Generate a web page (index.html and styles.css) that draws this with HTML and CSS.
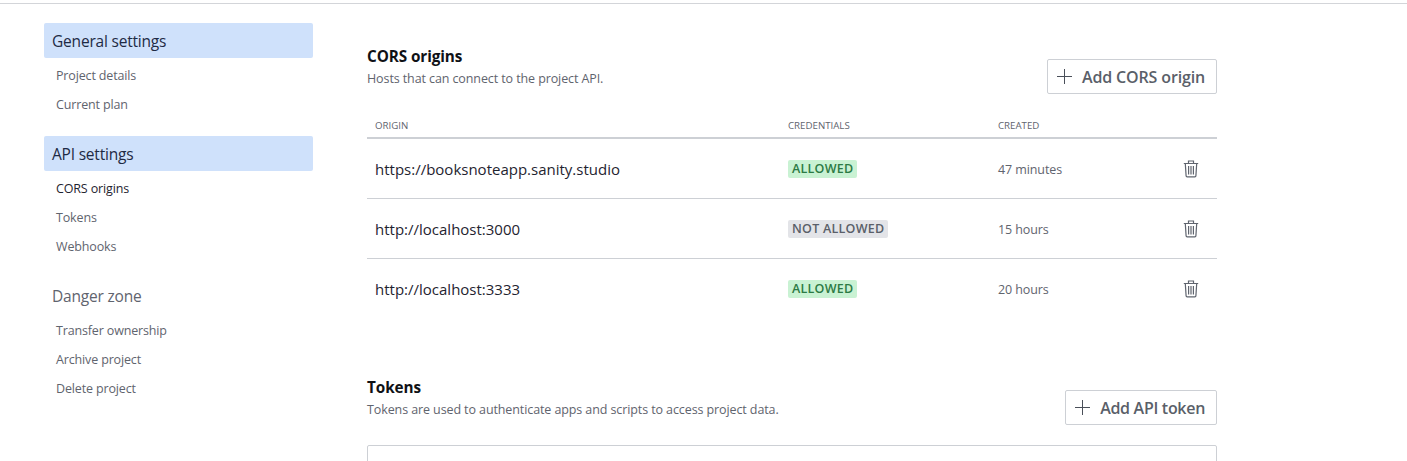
FILE: index.html
```html
<!DOCTYPE html>
<html lang="en">
<head>
<meta charset="utf-8">
<title>Project settings</title>
<link rel="stylesheet" href="styles.css">
</head>
<body>
<svg class="defs" width="0" height="0" aria-hidden="true">
  <symbol id="trash" viewBox="0 0 16 18">
    <path d="M.8 3.500h14.400M5.500 3.500V1h5v2.500M2.300 3.500l.8 12.400a1 1 0 0 0 1 .9h7.800a1 1 0 0 0 1-.9l.8-12.400M5.600 6v8.500M8 6v8.500M10.400 6v8.500" fill="none" stroke="currentColor" stroke-width="1.200"/>
  </symbol>
  <symbol id="plus" viewBox="0 0 15 15">
    <path d="M7.500 0v15M0 7.500h15" fill="none" stroke="currentColor" stroke-width="1"/>
  </symbol>
</svg>
<div class="layout">
  <nav class="sidebar">
    <div class="nav-group">
      <div class="nav-head active">General settings</div>
      <a class="nav-item">Project details</a>
      <a class="nav-item">Current plan</a>
    </div>
    <div class="nav-group">
      <div class="nav-head active">API settings</div>
      <a class="nav-item current">CORS origins</a>
      <a class="nav-item">Tokens</a>
      <a class="nav-item">Webhooks</a>
    </div>
    <div class="nav-group">
      <div class="nav-head danger">Danger zone</div>
      <a class="nav-item">Transfer ownership</a>
      <a class="nav-item">Archive project</a>
      <a class="nav-item">Delete project</a>
    </div>
  </nav>
  <main class="content">
    <section class="section cors">
      <header class="section-head">
        <div>
          <h2 class="section-title">CORS origins</h2>
          <p class="section-desc">Hosts that can connect to the project API.</p>
        </div>
        <button class="btn"><svg class="btn-icon"><use href="#plus"/></svg>Add CORS origin</button>
      </header>
      <div class="table">
        <div class="row thead">
          <div>ORIGIN</div><div>CREDENTIALS</div><div>CREATED</div><div></div>
        </div>
        <div class="row">
          <div class="origin">https://booksnoteapp.sanity.studio</div>
          <div class="badge-cell"><span class="badge ok">ALLOWED</span></div>
          <div class="created">47 minutes</div>
          <div class="actions"><svg class="trash"><use href="#trash"/></svg></div>
        </div>
        <div class="row">
          <div class="origin">http://localhost:3000</div>
          <div class="badge-cell"><span class="badge no">NOT ALLOWED</span></div>
          <div class="created">15 hours</div>
          <div class="actions"><svg class="trash"><use href="#trash"/></svg></div>
        </div>
        <div class="row last">
          <div class="origin">http://localhost:3333</div>
          <div class="badge-cell"><span class="badge ok">ALLOWED</span></div>
          <div class="created">20 hours</div>
          <div class="actions"><svg class="trash"><use href="#trash"/></svg></div>
        </div>
      </div>
    </section>
    <section class="section">
      <header class="section-head">
        <div>
          <h2 class="section-title">Tokens</h2>
          <p class="section-desc">Tokens are used to authenticate apps and scripts to access project data.</p>
        </div>
        <button class="btn btn-token"><svg class="btn-icon"><use href="#plus"/></svg>Add API token</button>
      </header>
      <div class="token-box"></div>
    </section>
  </main>
</div>
</body>
</html>
```
FILE: styles.css
```css
html, body { margin: 0; padding: 0; height: 100%; overflow: hidden; background: #fff; }
body { font-family: "Open Sans", "Noto Sans", sans-serif; color: #1f2430; border-top: 1px solid #d3d5d9; margin-top: 3px; box-sizing: border-box; }
.defs { position: absolute; }
.layout { display: flex; box-sizing: border-box; height: 457px; overflow: hidden; padding: 19px 0 0 44px; }
.sidebar { width: 269px; flex: none; }
.nav-group { margin-bottom: 17px; }
.nav-head { height: 35px; line-height: 36px; margin-bottom: 3px; padding-left: 8px; font-size: 15.5px; border-radius: 2px; letter-spacing: -.2px; }
.nav-head.active { background: #cfe1fb; color: #1e2a44; }
.nav-head.danger { line-height: 37px; color: #5f646e; }
.nav-item { display: block; height: 29px; line-height: 29px; padding-left: 12px; font-size: 12.5px; color: #5f646e; letter-spacing: -.15px; }
.nav-item.current { color: #1f2430; }
.content { width: 850px; margin-left: 54px; }
.section-head { display: flex; justify-content: space-between; align-items: flex-end; }
.section-title { margin: 0; font-size: 15.3px; line-height: 20px; font-weight: 700; color: #0f1116; letter-spacing: -.1px; }
.section-desc { margin: 4px 0 0; font-size: 12.5px; line-height: 18px; color: #5f646e; letter-spacing: -.1px; }
.cors { padding-top: 23px; margin-bottom: 59px; }
.btn { display: flex; align-items: center; height: 35px; box-sizing: border-box; padding: 0 11px 0 9px; background: #fff; border: 1px solid #cdd0d5; border-radius: 2px; font: 600 16px "Open Sans", sans-serif; color: #5a5f69; letter-spacing: -.15px; margin-bottom: -6px; }
.btn-token { letter-spacing: -.3px; }
.btn-icon { width: 15px; height: 15px; margin-right: 10px; color: #4a4f59; }
.table { margin-top: 24px; }
.row { display: grid; grid-template-columns: 413px 210px 1fr 40px; align-items: center; padding-left: 8px; height: 59px; border-bottom: 1px solid #cdd0d5; }
.row.last { border-bottom: 0; }
.row.thead { height: 24px; padding-top: 1px; border-bottom: 2px solid #cdd0d5; font-size: 9.7px; color: #5f646e; }
.origin { font-size: 15px; color: #1f2430; }
.badge-cell { display: flex; margin-top: 1px; }
.badge { height: 18px; line-height: 18px; padding: 0 4px; font-size: 12.5px; font-weight: 600; border-radius: 2px; letter-spacing: .25px; }
.badge.ok { background: #c9f2d3; color: #2c7a44; }
.badge.no { background: #e3e4e8; color: #5a5f69; }
.created { padding-top: 1px; font-size: 12.5px; color: #5f646e; letter-spacing: -.1px; }
.actions { display: flex; }
.trash { width: 16px; height: 18px; margin-left: 6px; color: #5f646e; }
.token-box { height: 60px; margin-top: 26px; border: 1px solid #cdd0d5; border-radius: 2px; }
```
